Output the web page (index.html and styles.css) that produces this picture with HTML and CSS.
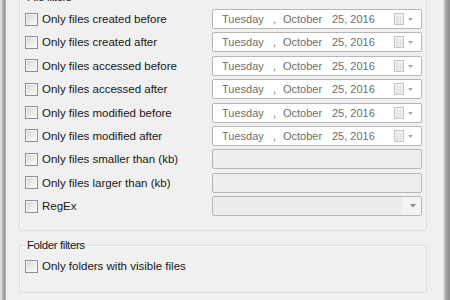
FILE: index.html
```html
<!DOCTYPE html>
<html lang="en">
<head>
    <meta charset="UTF-8">
    <title>Search Filters</title>
    <link rel="stylesheet" href="styles.css">
</head>
<body>
    <div class="window">
        <div class="frame-left"></div>
        <div class="content">
            <div class="group group-files">
                <span class="group-title">File filters</span>

                <div class="row">
                    <label class="check"><span class="box"></span>Only files created before</label>
                    <div class="date-field">
                        <span class="d-day">Tuesday</span><span class="d-comma">,</span><span class="d-month">October</span><span class="d-rest">25, 2016</span>
                        <svg class="cal-btn" width="20" height="12" viewBox="0 0 20 12"><rect x="0.5" y="0.5" width="9" height="11" fill="#f2f2f2" stroke="#c4c4c4"/><path d="M1 4h8M1 6.5h8M1 9h8M3.5 3v8M6.5 3v8" stroke="#e2e2e2"/><path d="M14 5h5l-2.5 3z" fill="#a8a8a8"/></svg>
                    </div>
                </div>
                <div class="row">
                    <label class="check"><span class="box"></span>Only files created after</label>
                    <div class="date-field">
                        <span class="d-day">Tuesday</span><span class="d-comma">,</span><span class="d-month">October</span><span class="d-rest">25, 2016</span>
                        <svg class="cal-btn" width="20" height="12" viewBox="0 0 20 12"><rect x="0.5" y="0.5" width="9" height="11" fill="#f2f2f2" stroke="#c4c4c4"/><path d="M1 4h8M1 6.5h8M1 9h8M3.5 3v8M6.5 3v8" stroke="#e2e2e2"/><path d="M14 5h5l-2.5 3z" fill="#a8a8a8"/></svg>
                    </div>
                </div>
                <div class="row">
                    <label class="check"><span class="box"></span>Only files accessed before</label>
                    <div class="date-field">
                        <span class="d-day">Tuesday</span><span class="d-comma">,</span><span class="d-month">October</span><span class="d-rest">25, 2016</span>
                        <svg class="cal-btn" width="20" height="12" viewBox="0 0 20 12"><rect x="0.5" y="0.5" width="9" height="11" fill="#f2f2f2" stroke="#c4c4c4"/><path d="M1 4h8M1 6.5h8M1 9h8M3.5 3v8M6.5 3v8" stroke="#e2e2e2"/><path d="M14 5h5l-2.5 3z" fill="#a8a8a8"/></svg>
                    </div>
                </div>
                <div class="row">
                    <label class="check"><span class="box"></span>Only files accessed after</label>
                    <div class="date-field">
                        <span class="d-day">Tuesday</span><span class="d-comma">,</span><span class="d-month">October</span><span class="d-rest">25, 2016</span>
                        <svg class="cal-btn" width="20" height="12" viewBox="0 0 20 12"><rect x="0.5" y="0.5" width="9" height="11" fill="#f2f2f2" stroke="#c4c4c4"/><path d="M1 4h8M1 6.5h8M1 9h8M3.5 3v8M6.5 3v8" stroke="#e2e2e2"/><path d="M14 5h5l-2.5 3z" fill="#a8a8a8"/></svg>
                    </div>
                </div>
                <div class="row">
                    <label class="check"><span class="box"></span>Only files modified before</label>
                    <div class="date-field">
                        <span class="d-day">Tuesday</span><span class="d-comma">,</span><span class="d-month">October</span><span class="d-rest">25, 2016</span>
                        <svg class="cal-btn" width="20" height="12" viewBox="0 0 20 12"><rect x="0.5" y="0.5" width="9" height="11" fill="#f2f2f2" stroke="#c4c4c4"/><path d="M1 4h8M1 6.5h8M1 9h8M3.5 3v8M6.5 3v8" stroke="#e2e2e2"/><path d="M14 5h5l-2.5 3z" fill="#a8a8a8"/></svg>
                    </div>
                </div>
                <div class="row">
                    <label class="check"><span class="box"></span>Only files modified after</label>
                    <div class="date-field">
                        <span class="d-day">Tuesday</span><span class="d-comma">,</span><span class="d-month">October</span><span class="d-rest">25, 2016</span>
                        <svg class="cal-btn" width="20" height="12" viewBox="0 0 20 12"><rect x="0.5" y="0.5" width="9" height="11" fill="#f2f2f2" stroke="#c4c4c4"/><path d="M1 4h8M1 6.5h8M1 9h8M3.5 3v8M6.5 3v8" stroke="#e2e2e2"/><path d="M14 5h5l-2.5 3z" fill="#a8a8a8"/></svg>
                    </div>
                </div>
                <div class="row">
                    <label class="check"><span class="box"></span>Only files smaller than (kb)</label>
                    <div class="text-field"></div>
                </div>
                <div class="row">
                    <label class="check"><span class="box"></span>Only files larger than (kb)</label>
                    <div class="text-field"></div>
                </div>
                <div class="row">
                    <label class="check"><span class="box"></span>RegEx</label>
                    <div class="combo-field">
                        <span class="combo-btn"><svg width="6" height="4" viewBox="0 0 6 4"><path d="M0 0h6l-3 3.5z" fill="#8c8c8c"/></svg></span>
                    </div>
                </div>
            </div>

            <div class="group group-folders">
                <span class="group-title">Folder filters</span>
                <div class="row">
                    <label class="check"><span class="box"></span>Only folders with visible files</label>
                </div>
            </div>
        </div>
        <div class="frame-right"></div>
    </div>
</body>
</html>
```

FILE: styles.css
```css
* {
    margin: 0;
    padding: 0;
    box-sizing: border-box;
}

body {
    background: #f0f0f0;
    font-family: "Liberation Sans", Arial, sans-serif;
    font-size: 11.5px;
    color: #161616;
}

.window {
    display: flex;
    height: 300px;
    overflow: hidden;
}

.frame-left {
    width: 6px;
    background: linear-gradient(to right, #d9d9d9 0, #d9d9d9 2px, #a4a4a4 3px, #9a9a9a 5px, #c8c8c8 6px);
}

.frame-right {
    width: 7px;
    background: linear-gradient(to right, #fafafa 0, #d0d0d0 1px, #a0a0a0 3px, #8e8e8e 7px);
}

.content {
    flex: 1;
}

.group {
    position: relative;
    margin: 0 16px 0 13px;
    border: 1px solid #d5dfe5;
    border-radius: 3px;
    box-shadow: inset 1px 1px 0 #fbfbfb;
    padding: 0 4px 0 5px;
}

.group-title {
    position: absolute;
    top: -8px;
    left: 6px;
    padding: 0 1px;
    background: #f0f0f0;
    line-height: 14px;
    letter-spacing: -0.4px;
}

.group-files {
    margin-top: -3px;
    padding-top: 11px;
    padding-bottom: 14px;
}

.group-folders {
    margin-top: 14px;
    padding-top: 10px;
    padding-bottom: 16px;
}

.row {
    display: grid;
    grid-template-columns: 187px 210px;
    align-items: center;
    height: 20px;
    margin-bottom: 3.375px;
}

.row:last-child {
    margin-bottom: 0;
}

.check {
    display: flex;
    align-items: center;
    white-space: nowrap;
    line-height: 14px;
}

.box {
    width: 13px;
    height: 13px;
    margin-right: 4px;
    border: 1px solid #8f8f8f;
    background: linear-gradient(135deg, #cfd1d4 0%, #ececec 55%, #fbfbfb 100%);
    box-shadow: inset 0 0 0 1px #f4f4f4;
}

.date-field,
.text-field,
.combo-field {
    height: 20px;
    border: 1px solid #b5b7bb;
    border-radius: 2px;
}

.date-field {
    display: flex;
    align-items: center;
    background: #fff;
    padding-left: 9px;
    font-size: 11px;
    color: #6d6d6d;
}

.d-day {
    width: 51px;
}

.d-comma {
    width: 10px;
}

.d-month {
    width: 49px;
}

.cal-btn {
    margin-left: auto;
    margin-right: 7px;
}

.text-field {
    background: #efefef;
}

.combo-field {
    display: flex;
    justify-content: flex-end;
    background: #ececec;
}

.combo-btn {
    display: flex;
    align-items: center;
    justify-content: center;
    width: 19px;
    background: #f4f4f4;
    padding-left: 2px;
}
```
